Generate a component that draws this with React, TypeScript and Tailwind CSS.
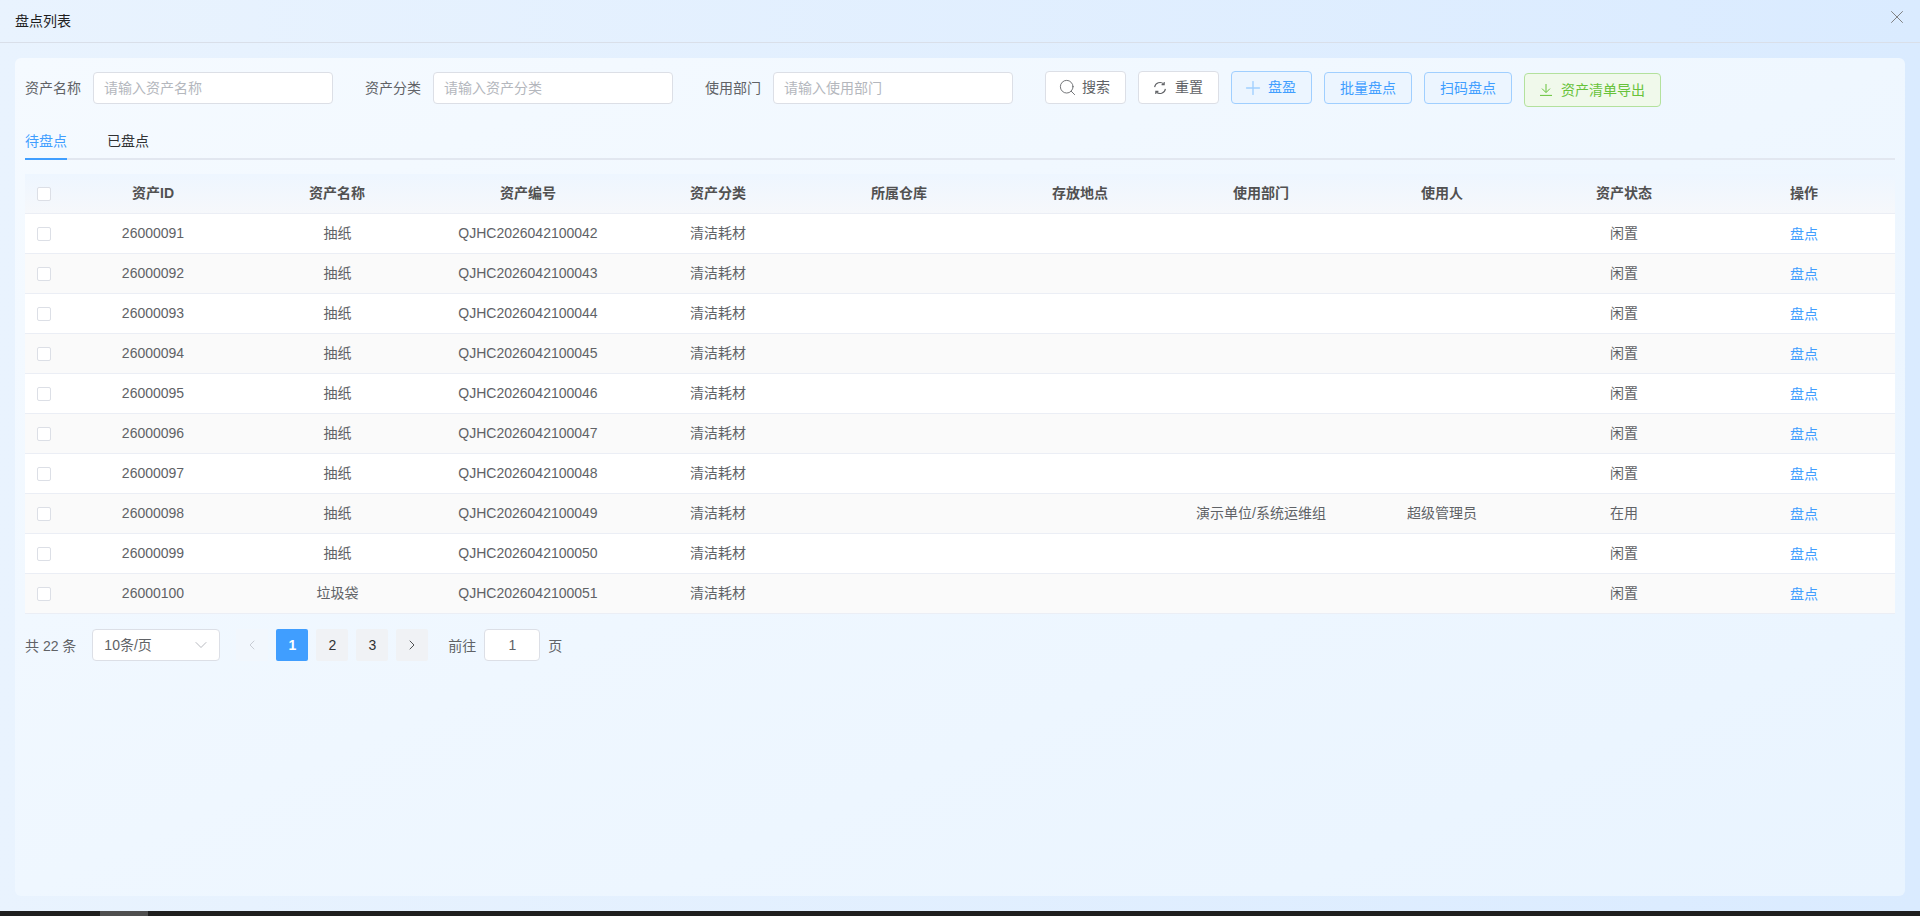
import { ChevronDown, ChevronLeft, ChevronRight, Plus, Search, X } from 'lucide-react'

const rows = [...Array(10)].map((_, i) => ({
  id: 26000091 + i,
  name: i === 9 ? '垃圾袋' : '抽纸',
  code: `QJHC20260421000${42 + i}`,
  dept: i === 7 ? '演示单位/系统运维组' : '',
  user: i === 7 ? '超级管理员' : '',
  status: i === 7 ? '在用' : '闲置',
}))

const headers = ['资产ID', '资产名称', '资产编号', '资产分类', '所属仓库', '存放地点', '使用部门', '使用人', '资产状态', '操作']
const gridCols = 'grid grid-cols-[38px_180px_188px_194px_186px_176px_186px_176px_186px_178px_182px]'

function RefreshIcon() {
  return (
    <svg width="14" height="14" viewBox="0 0 14 14" fill="none" stroke="#606266" strokeWidth="1.1">
      <path d="M1.6 6.2A5.4 5.4 0 0 1 10.8 3.2" />
      <path d="M12.4 7.8A5.4 5.4 0 0 1 3.2 10.8" />
      <path d="M11.2 1v2.6H8.6" />
      <path d="M2.8 13v-2.6h2.6" />
    </svg>
  )
}

function DownloadIcon() {
  return (
    <svg width="14" height="12" viewBox="0 0 14 12" fill="none" stroke="#67c23a" strokeWidth="1">
      <path d="M7 0v8.2" />
      <path d="M3 4.6l4 4 4-4" />
      <path d="M1 11.4h12" />
    </svg>
  )
}

function Field({ label, placeholder }: { label: string; placeholder: string }) {
  return (
    <div className="flex items-center gap-[12px] w-[308px]">
      <span className="w-[56px] shrink-0 text-[#606266]">{label}</span>
      <div className="h-[32px] w-[240px] bg-white border border-[#dcdfe6] rounded-[4px] px-[10px] flex items-center text-[#b4b7bd]">
        {placeholder}
      </div>
    </div>
  )
}

function Checkbox() {
  return <span className="block w-[14px] h-[14px] bg-white border border-[#dcdfe6] rounded-[2px]" />
}

export default function App() {
  return (
    <div className="h-[916px] w-[1920px] overflow-hidden flex flex-col text-[14px] font-['Liberation_Sans','Noto_Sans_CJK_SC',sans-serif] bg-gradient-to-r from-[#e9f3fe] to-[#daebff]">
      {/* header */}
      <div className="h-[43px] shrink-0 border-b border-[#d9dfe9] flex items-center justify-between pl-[15px] pr-[12px]">
        <span className="text-[#1f1f1f]">盘点列表</span>
        <X size={22} strokeWidth={1} className="text-[#777] -mt-[8px]" />
      </div>

      <div className="flex-1 px-[15px] pt-[15px] pb-[15px] min-h-0">
        <div className="h-full rounded-[6px] bg-gradient-to-br from-[#f5faff] to-[#e9f4ff] px-[10px] pt-[14px]">
          {/* filters */}
          <div className="flex items-start h-[36px]">
            <div className="flex gap-[32px]">
              <Field label="资产名称" placeholder="请输入资产名称" />
              <Field label="资产分类" placeholder="请输入资产分类" />
              <Field label="使用部门" placeholder="请输入使用部门" />
            </div>
            <div className="flex items-start gap-[12px] ml-[32px] -mt-[1px]">
              <button className="h-[33px] w-[81px] pl-[12px] bg-white border border-[#dcdfe6] rounded-[4px] flex items-center gap-[5px] text-[#606266]">
                <Search size={19} strokeWidth={1.1} />
                搜索
              </button>
              <button className="h-[33px] w-[81px] pl-[14px] bg-white border border-[#dcdfe6] rounded-[4px] flex items-center gap-[8px] text-[#606266]">
                <RefreshIcon />
                重置
              </button>
              <button className="h-[33px] w-[81px] pl-[10px] bg-[#ecf5ff] border border-[#a0cfff] rounded-[4px] flex items-center gap-[4px] text-[#409eff]">
                <Plus size={22} strokeWidth={1.5} className="text-[#a0cfff]" />
                盘盈
              </button>
              <button className="h-[32px] w-[88px] mt-[1px] bg-[#ecf5ff] border border-[#a0cfff] rounded-[4px] text-[#409eff]">
                批量盘点
              </button>
              <button className="h-[32px] w-[88px] mt-[1px] bg-[#ecf5ff] border border-[#a0cfff] rounded-[4px] text-[#409eff]">
                扫码盘点
              </button>
              <button className="h-[34px] w-[137px] mt-[2px] pl-[14px] bg-[#f0f9eb] border border-[#b3e19d] rounded-[4px] flex items-center gap-[8px] text-[#67c23a]">
                <DownloadIcon />
                资产清单导出
              </button>
            </div>
          </div>

          {/* tabs */}
          <div className="mt-[14px] h-[38px] flex gap-[40px] border-b-2 border-[#e2e7f0]">
            <span className="h-[38px] leading-[38px] border-b-2 border-[#409eff] text-[#409eff]">待盘点</span>
            <span className="h-[38px] leading-[38px] text-[#303133]">已盘点</span>
          </div>

          {/* table */}
          <div className="mt-[14px]">
            <div className={`${gridCols} h-[40px] items-center text-center font-bold text-[#515151] border-b border-[#ebeef5] bg-gradient-to-b from-[#eef6ff] to-[#f6f8fb]`}>
              <div className="pl-[12px]"><Checkbox /></div>
              {headers.map((h, i) => (
                <div key={h} className={i === 9 ? 'col-start-11' : ''}>{h}</div>
              ))}
            </div>
            {rows.map((r, i) => (
              <div key={r.id} className={`${gridCols} h-[40px] items-center text-center text-[#606266] border-b border-[#ebeef5] ${i % 2 ? 'bg-[#fafafa]' : 'bg-white'}`}>
                <div className="pl-[12px]"><Checkbox /></div>
                <div>{r.id}</div>
                <div className="pl-[1px]">{r.name}</div>
                <div>{r.code}</div>
                <div>清洁耗材</div>
                <div />
                <div />
                <div>{r.dept}</div>
                <div>{r.user}</div>
                <div>{r.status}</div>
                <div className="col-start-11 text-[#409eff] mt-[2px]">盘点</div>
              </div>
            ))}
          </div>

          {/* pagination */}
          <div className="mt-[15px] flex items-center h-[32px] text-[#606266]">
            <span className="pt-[2px]">共 22 条</span>
            <div className="ml-[16px] w-[128px] h-[32px] bg-white border border-[#dcdfe6] rounded-[4px] pl-[11px] pr-[8px] flex items-center justify-between">
              10条/页
              <ChevronDown size={20} strokeWidth={1} className="text-[#a8abb2]" />
            </div>
            <div className="ml-[16px] flex gap-[8px] text-[#303133]">
              <span className="w-[32px] h-[32px] bg-[#f2f7fd] rounded-[2px] flex items-center justify-center text-[#c0c4cc]">
                <ChevronLeft size={16} strokeWidth={1.25} />
              </span>
              <span className="w-[32px] h-[32px] bg-[#409eff] rounded-[2px] flex items-center justify-center text-white font-bold">1</span>
              <span className="w-[32px] h-[32px] bg-[#f0f2f5] rounded-[2px] flex items-center justify-center">2</span>
              <span className="w-[32px] h-[32px] bg-[#f0f2f5] rounded-[2px] flex items-center justify-center">3</span>
              <span className="w-[32px] h-[32px] bg-[#f0f2f5] rounded-[2px] flex items-center justify-center">
                <ChevronRight size={16} strokeWidth={1.25} />
              </span>
            </div>
            <span className="ml-[20px] pt-[2px]">前往</span>
            <div className="ml-[8px] w-[56px] h-[32px] bg-white border border-[#dcdfe6] rounded-[4px] flex items-center justify-center">1</div>
            <span className="ml-[8px] pt-[2px]">页</span>
          </div>
        </div>
      </div>

      {/* window scrollbar */}
      <div className="h-[5px] shrink-0 bg-[#1f1f1f] flex">
        <div className="ml-[100px] w-[48px] bg-[#4f4f4f]" />
      </div>
    </div>
  )
}
